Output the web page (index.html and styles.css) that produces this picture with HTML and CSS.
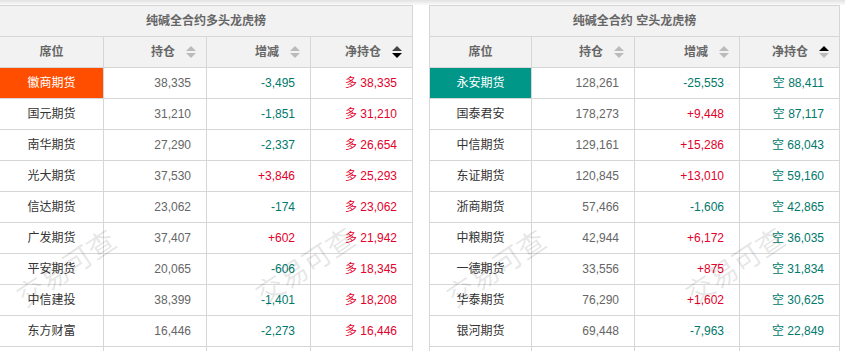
FILE: index.html
```html
<!DOCTYPE html>
<html lang="zh">
<head>
<meta charset="utf-8">
<link rel="stylesheet" href="styles.css">
</head>
<body>
<div class="shade"></div>
<div class="boards">
  <div class="board board-long">
    <div class="title">纯碱全合约多头龙虎榜</div>
    <div class="row head">
      <div class="c c1">席位</div>
      <div class="c hn">持仓<span class="sort"><i class="up"></i><i class="dn"></i></span></div>
      <div class="c hn">增减<span class="sort"><i class="up"></i><i class="dn"></i></span></div>
      <div class="c hn">净持仓<span class="sort desc"><i class="up"></i><i class="dn"></i></span></div>
    </div>
    <div class="row"><div class="c c1 hl-long">徽商期货</div><div class="c n">38,335</div><div class="c n down">-3,495</div><div class="c n red">多 38,335</div></div>
    <div class="row"><div class="c c1">国元期货</div><div class="c n">31,210</div><div class="c n down">-1,851</div><div class="c n red">多 31,210</div></div>
    <div class="row"><div class="c c1">南华期货</div><div class="c n">27,290</div><div class="c n down">-2,337</div><div class="c n red">多 26,654</div></div>
    <div class="row"><div class="c c1">光大期货</div><div class="c n">37,530</div><div class="c n red">+3,846</div><div class="c n red">多 25,293</div></div>
    <div class="row"><div class="c c1">信达期货</div><div class="c n">23,062</div><div class="c n down">-174</div><div class="c n red">多 23,062</div></div>
    <div class="row"><div class="c c1">广发期货</div><div class="c n">37,407</div><div class="c n red">+602</div><div class="c n red">多 21,942</div></div>
    <div class="row"><div class="c c1">平安期货</div><div class="c n">20,065</div><div class="c n down">-606</div><div class="c n red">多 18,345</div></div>
    <div class="row"><div class="c c1">中信建投</div><div class="c n">38,399</div><div class="c n down">-1,401</div><div class="c n red">多 18,208</div></div>
    <div class="row"><div class="c c1">东方财富</div><div class="c n">16,446</div><div class="c n down">-2,273</div><div class="c n red">多 16,446</div></div>
    <div class="row"><div class="c c1">&nbsp;</div><div class="c n"></div><div class="c n"></div><div class="c n"></div></div>
    <div class="wm wm-a">交易可查</div>
    <div class="wm wm-b">交易可查</div>
  </div>
  <div class="board board-short">
    <div class="title">纯碱全合约 空头龙虎榜</div>
    <div class="row head">
      <div class="c c1">席位</div>
      <div class="c hn">持仓<span class="sort"><i class="up"></i><i class="dn"></i></span></div>
      <div class="c hn">增减<span class="sort"><i class="up"></i><i class="dn"></i></span></div>
      <div class="c hn">净持仓<span class="sort asc"><i class="up"></i><i class="dn"></i></span></div>
    </div>
    <div class="row"><div class="c c1 hl-short">永安期货</div><div class="c n">128,261</div><div class="c n down">-25,553</div><div class="c n down">空 88,411</div></div>
    <div class="row"><div class="c c1">国泰君安</div><div class="c n">178,273</div><div class="c n red">+9,448</div><div class="c n down">空 87,117</div></div>
    <div class="row"><div class="c c1">中信期货</div><div class="c n">129,161</div><div class="c n red">+15,286</div><div class="c n down">空 68,043</div></div>
    <div class="row"><div class="c c1">东证期货</div><div class="c n">120,845</div><div class="c n red">+13,010</div><div class="c n down">空 59,160</div></div>
    <div class="row"><div class="c c1">浙商期货</div><div class="c n">57,466</div><div class="c n down">-1,606</div><div class="c n down">空 42,865</div></div>
    <div class="row"><div class="c c1">中粮期货</div><div class="c n">42,944</div><div class="c n red">+6,172</div><div class="c n down">空 36,035</div></div>
    <div class="row"><div class="c c1">一德期货</div><div class="c n">33,556</div><div class="c n red">+875</div><div class="c n down">空 31,834</div></div>
    <div class="row"><div class="c c1">华泰期货</div><div class="c n">76,290</div><div class="c n red">+1,602</div><div class="c n down">空 30,625</div></div>
    <div class="row"><div class="c c1">银河期货</div><div class="c n">69,448</div><div class="c n down">-7,963</div><div class="c n down">空 22,849</div></div>
    <div class="row"><div class="c c1">&nbsp;</div><div class="c n"></div><div class="c n"></div><div class="c n"></div></div>
    <div class="wm wm-a">交易可查</div>
    <div class="wm wm-b">交易可查</div>
  </div>
</div>
</body>
</html>
```
FILE: styles.css
```css
html, body {
  margin: 0;
  padding: 0;
  background: #fff;
  overflow: hidden;
}
body {
  width: 845px;
  height: 351px;
  font-family: "Liberation Sans", "Noto Sans CJK SC", sans-serif;
  font-size: 12px;
  color: #333;
}
.shade {
  height: 5px;
  background: linear-gradient(#e2e2e2, #fbfbfb);
}
.boards {
  display: flex;
  gap: 16px;
  align-items: flex-start;
}
.board {
  position: relative;
  overflow: hidden;
  border-top: 1px solid #d6d6d6;
}
.board-long {
  width: 413px;
}
.board-short {
  width: 410px;
  border-left: 1px solid #d6d6d6;
}
.title {
  height: 30px;
  line-height: 30px;
  text-align: center;
  background: #f2f2f2;
  font-weight: bold;
  color: #666;
  border-bottom: 1px solid #d6d6d6;
  border-right: 1px solid #d6d6d6;
}
.row {
  display: grid;
  height: 31px;
}
.board-long .row {
  grid-template-columns: 104px 103px 104px 102px;
}
.board-short .row {
  grid-template-columns: 102px 103px 105px 100px;
}
.c {
  box-sizing: border-box;
  height: 31px;
  line-height: 30px;
  border-right: 1px solid #d6d6d6;
  border-bottom: 1px solid #d6d6d6;
  white-space: nowrap;
}
.c1 {
  text-align: center;
  color: #333;
}
.n {
  text-align: right;
  padding-right: 15px;
  color: #666;
}
.head .c {
  background: #f2f2f2;
  font-weight: bold;
  color: #666;
}
.hn {
  display: flex;
  justify-content: flex-end;
  align-items: center;
  gap: 11px;
  padding-right: 10px;
}
.sort {
  display: flex;
  flex-direction: column;
  gap: 2px;
  width: 10px;
}
.sort i {
  display: block;
  width: 0;
  height: 0;
  border-left: 5px solid transparent;
  border-right: 5px solid transparent;
}
.sort .up {
  border-bottom: 5px solid #bbb;
}
.sort .dn {
  border-top: 5px solid #bbb;
}
.sort.desc .dn {
  border-top-color: #000;
}
.sort.desc .up {
  border-bottom-color: #444;
}
.sort.asc .up {
  border-bottom-color: #000;
}
.red {
  color: #e4002b;
}
.down {
  color: #00796b;
}
.hl-long {
  background: #ff4e00;
  color: #fff;
}
.hl-short {
  background: #009688;
  color: #fff;
}
.wm {
  position: absolute;
  font-size: 28px;
  line-height: 28px;
  height: 28px;
  width: 112px;
  color: rgba(0, 0, 0, 0.11);
  transform: rotate(-34deg);
  white-space: nowrap;
  pointer-events: none;
}
.wm-a {
  left: 11px;
  top: 249px;
}
.wm-b {
  left: 250px;
  top: 247px;
}
```
